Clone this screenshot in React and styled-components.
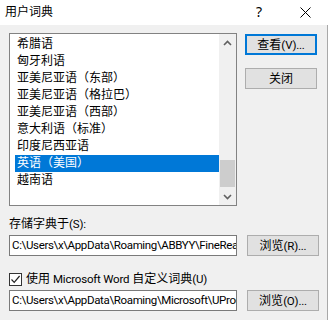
import React from 'react'
import styled, { createGlobalStyle } from 'styled-components'

const GlobalStyle = createGlobalStyle`
  html, body {
    margin: 0;
    padding: 0;
    background: #f0f0f0;
  }
  body {
    font-family: Roboto, "Noto Sans CJK SC", sans-serif;
    font-size: 12px;
    color: #000;
  }
`

const languages = [
  '希腊语',
  '匈牙利语',
  '亚美尼亚语（东部）',
  '亚美尼亚语（格拉巴）',
  '亚美尼亚语（西部）',
  '意大利语（标准）',
  '印度尼西亚语',
  '英语（美国）',
  '越南语',
]

const SELECTED = 7

const App = () => {
  return (
    <Window>
      <GlobalStyle />
      <TitleBar>
        <Title>用户词典</Title>
        <TitleButtons>
          <HelpMark>?</HelpMark>
          <CloseMark>
            <svg width="11" height="11" viewBox="0 0 11 11">
              <path d="M0.5 0.5 L10.5 10.5 M10.5 0.5 L0.5 10.5" stroke="#000" strokeWidth="1" fill="none" />
            </svg>
          </CloseMark>
        </TitleButtons>
      </TitleBar>

      <Body>
        <TopRow>
          <ListBox>
            <Items>
              {languages.map((l, i) => (
                <Item key={l} selected={i === SELECTED}>{l}</Item>
              ))}
            </Items>
            <ScrollBar>
              <Arrow>
                <svg width="9" height="6" viewBox="0 0 9 6">
                  <path d="M1 5 L4.5 1.5 L8 5" stroke="#606060" strokeWidth="1.6" fill="none" />
                </svg>
              </Arrow>
              <Track>
                <Thumb />
              </Track>
              <Arrow>
                <svg width="9" height="6" viewBox="0 0 9 6">
                  <path d="M1 1 L4.5 4.5 L8 1" stroke="#606060" strokeWidth="1.6" fill="none" />
                </svg>
              </Arrow>
            </ScrollBar>
          </ListBox>
          <ButtonColumn>
            <Button primary>查看<Latin>(V)...</Latin></Button>
            <Button>关闭</Button>
          </ButtonColumn>
        </TopRow>

        <Label>存储字典于<Latin>(S):</Latin></Label>
        <PathRow>
          <PathBox>C:\Users\x\AppData\Roaming\ABBYY\FineRea</PathBox>
          <Button>浏览<Latin>(R)...</Latin></Button>
        </PathRow>

        <CheckRow>
          <CheckBox>
            <svg width="11" height="11" viewBox="0 0 11 11">
              <path d="M1.5 5.5 L4.2 8.3 L9.6 2" stroke="#222" strokeWidth="1.2" fill="none" />
            </svg>
          </CheckBox>
          <span>使用 <Latin>Microsoft Word</Latin> 自定义词典<Latin>(U)</Latin></span>
        </CheckRow>
        <PathRow>
          <PathBox>C:\Users\x\AppData\Roaming\Microsoft\UProc</PathBox>
          <Button>浏览<Latin>(O)...</Latin></Button>
        </PathRow>
      </Body>
    </Window>
  )
}

export default App

const Window = styled.div`
  width: 328px;
  height: 320px;
  display: flex;
  flex-direction: column;
  overflow: hidden;
  background: #f0f0f0;
`

const TitleBar = styled.div`
  height: 25px;
  flex: none;
  background: #fff;
  display: flex;
  align-items: center;
  justify-content: space-between;
  padding-left: 5px;
  padding-bottom: 1px;
  box-sizing: border-box;
`

const Title = styled.div`
  font-size: 12px;
  line-height: 16px;
`

const TitleButtons = styled.div`
  display: flex;
  align-items: center;
`

const HelpMark = styled.div`
  width: 46px;
  text-align: center;
  font-family: "Noto Sans", sans-serif;
  font-size: 14px;
  line-height: 16px;
  padding-left: 2px;
`

const CloseMark = styled.div`
  width: 46px;
  height: 24px;
  display: flex;
  align-items: center;
  justify-content: center;
`

const Latin = styled.span`
  font-size: 11.5px;
  letter-spacing: -0.2px;
`

const Body = styled.div`
  flex: 1;
  padding: 8px 10px 0 9px;
  display: flex;
  flex-direction: column;
  border-right: 1px solid #a8a8a8;
`

const TopRow = styled.div`
  display: flex;
  gap: 8px;
`

const ListBox = styled.div`
  width: 228px;
  height: 173px;
  box-sizing: border-box;
  border: 1px solid #828282;
  background: #fff;
  display: flex;
`

const Items = styled.div`
  flex: 1;
  padding: 2px 0 0 5px;
  display: flex;
  flex-direction: column;
`

const Item = styled.div`
  height: 17px;
  line-height: 17px;
  padding-left: 2px;
  white-space: nowrap;
  background: ${p => (p.selected ? '#0078d7' : 'transparent')};
  color: ${p => (p.selected ? '#fff' : '#000')};
`

const ScrollBar = styled.div`
  width: 17px;
  background: #f0f0f0;
  display: flex;
  flex-direction: column;
`

const Arrow = styled.div`
  height: 17px;
  display: flex;
  align-items: center;
  justify-content: center;
`

const Track = styled.div`
  flex: 1;
  display: flex;
  flex-direction: column;
  justify-content: flex-end;
  padding: 0 1px 1px;
`

const Thumb = styled.div`
  height: 27px;
  background: #cdcdcd;
`

const ButtonColumn = styled.div`
  display: flex;
  flex-direction: column;
  gap: 13px;
  padding-top: 1px;
`

const Button = styled.div`
  width: 72px;
  height: 21px;
  box-sizing: border-box;
  background: #e1e1e1;
  border: 1px solid ${p => (p.primary ? '#0078d7' : '#adadad')};
  box-shadow: ${p => (p.primary ? 'inset 0 0 0 1px #0078d7' : 'none')};
  display: flex;
  align-items: center;
  justify-content: center;
  line-height: 16px;
  white-space: nowrap;
  flex: none;
`

const Label = styled.div`
  margin-top: 10px;
  line-height: 16px;
  height: 16px;
`

const PathRow = styled.div`
  display: flex;
  gap: 10px;
  margin-top: 3px;
`

const PathBox = styled.div`
  width: 228px;
  height: 21px;
  box-sizing: border-box;
  border: 1px solid #7a7a7a;
  background: #fff;
  padding-left: 2px;
  line-height: 19px;
  font-size: 11.5px;
  letter-spacing: -0.35px;
  white-space: nowrap;
  overflow: hidden;
  flex: none;
`

const CheckRow = styled.div`
  margin-top: 15px;
  height: 16px;
  display: flex;
  align-items: center;
  gap: 4px;
  line-height: 16px;
  white-space: nowrap;
`

const CheckBox = styled.div`
  width: 13px;
  height: 13px;
  box-sizing: border-box;
  border: 1px solid #333;
  background: #fff;
  display: flex;
  align-items: center;
  justify-content: center;
`
